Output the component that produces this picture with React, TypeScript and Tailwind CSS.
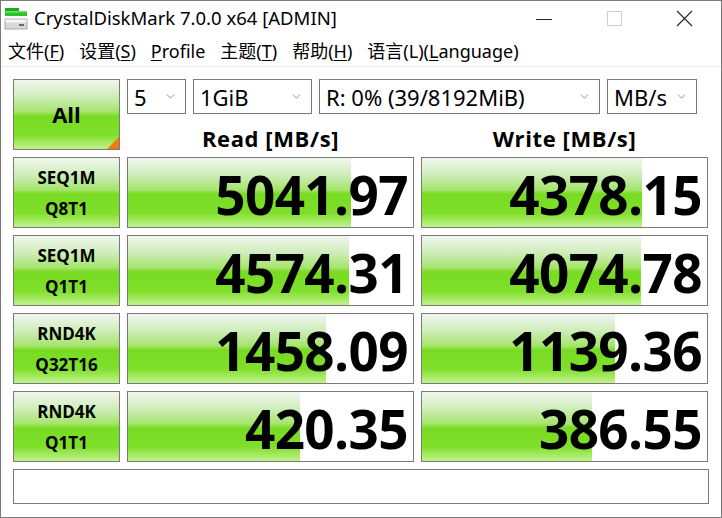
import { ChevronDown } from "lucide-react";

const rows = [
  { l1: "SEQ1M", l2: "Q8T1", read: "5041.97", write: "4378.15" },
  { l1: "SEQ1M", l2: "Q1T1", read: "4574.31", write: "4074.78" },
  { l1: "RND4K", l2: "Q32T16", read: "1458.09", write: "1139.36" },
  { l1: "RND4K", l2: "Q1T1", read: "420.35", write: "386.55" },
];

const green =
  "bg-[linear-gradient(to_bottom,#f1f6ee_0%,#d2eec0_22%,#a6e46e_46%,#78db22_52%,#80e02c_80%,#c2f28e_100%)]";

// log scale like the real meter
const ratio = (v: string) => Math.min(1, Math.log10(parseFloat(v) * 10) / 6);

function Mnemonic({ pre, key_, post }: { pre: string; key_: string; post: string }) {
  return (
    <span>
      {pre}
      <span className="underline underline-offset-2">{key_}</span>
      {post}
    </span>
  );
}

function Select({ text, w }: { text: string; w: string }) {
  return (
    <div className={`${w} h-[35px] border border-[#7a7a7a] bg-white flex items-center justify-between pl-[6px] pr-[8px]`}>
      <span className="text-[22px] leading-none text-black">{text}</span>
      <ChevronDown size={13} strokeWidth={1.2} className="text-[#555]" />
    </div>
  );
}

function Meter({ value }: { value: string }) {
  return (
    <div className="relative h-[71px] border border-[#7a7a7a] bg-white flex items-center justify-end pr-[5px]">
      <div className={`absolute left-0 top-0 bottom-0 ${green}`} style={{ width: `${ratio(value) * 100}%` }} />
      <span className="relative text-[53px] font-bold leading-none text-black tracking-[-0.6px] pt-[4px]">{value}</span>
    </div>
  );
}

export default function App() {
  return (
    <div className="w-[722px] h-[518px] bg-white border border-[#7a7a7a] flex flex-col font-['Noto_Sans','Noto_Sans_CJK_SC',sans-serif] text-black overflow-hidden">
      {/* title bar */}
      <div className="h-[34px] flex items-center shrink-0">
        <svg width="24" height="24" viewBox="0 0 24 24" className="ml-[3px]">
          <rect x="1" y="2" width="14" height="4" fill="#1faa1f" />
          <rect x="1" y="5" width="22" height="5" fill="#2cc22c" />
          <rect x="1" y="5" width="22" height="1.5" fill="#6fe06f" />
          <rect x="1" y="13" width="22" height="10" fill="#d8d8d8" stroke="#9a9a9a" strokeWidth="0.8" />
          <rect x="1.5" y="13.5" width="21" height="3" fill="#f4f4f4" />
          <rect x="15" y="18" width="5" height="2" fill="#6a6a6a" />
        </svg>
        <span className="ml-[6px] text-[18.5px] leading-none">CrystalDiskMark 7.0.0 x64 [ADMIN]</span>
        <div className="ml-auto flex items-center h-full">
          <div className="w-[70px] h-full flex items-center justify-center">
            <div className="w-[16px] h-px bg-[#222] mt-[2px]" />
          </div>
          <div className="w-[70px] h-full flex items-center justify-center">
            <div className="w-[15px] h-[15px] border border-[#cfcfcf]" />
          </div>
          <div className="w-[70px] h-full flex items-center justify-center mr-[2px]">
            <svg width="17" height="17" viewBox="0 0 17 17">
              <path d="M1 1 L16 16 M16 1 L1 16" stroke="#222" strokeWidth="1.1" />
            </svg>
          </div>
        </div>
      </div>

      {/* menu bar */}
      <div className="h-[32px] flex items-center gap-[15px] pl-[7px] text-[18px] leading-none border-b border-[#ececec] shrink-0">
        <Mnemonic pre="文件(" key_="F" post=")" />
        <Mnemonic pre="设置(" key_="S" post=")" />
        <Mnemonic pre="" key_="P" post="rofile" />
        <Mnemonic pre="主题(" key_="T" post=")" />
        <Mnemonic pre="帮助(" key_="H" post=")" />
        <Mnemonic pre="语言(L)(" key_="L" post="anguage)" />
      </div>

      {/* body */}
      <div className="pl-[12px] pt-[12px] flex flex-col gap-[7px] font-['Open_Sans','Noto_Sans',sans-serif]">
        <div className="grid grid-cols-[107px_287px_287px] gap-x-[7px] h-[71px]">
          <div className={`relative h-[71px] border border-[#7a7a7a] ${green} flex items-center justify-center`}>
            <span className="text-[22px] font-bold">All</span>
            <div className="absolute right-0 bottom-0 w-0 h-0 border-l-[12px] border-l-transparent border-b-[12px] border-b-[#f27a0c]" />
          </div>
          <div className="col-span-2 flex flex-col">
            <div className="flex gap-[7px] font-['Noto_Sans',sans-serif]">
              <Select text="5" w="w-[59px]" />
              <Select text="1GiB" w="w-[119px]" />
              <Select text="R: 0% (39/8192MiB)" w="w-[281px]" />
              <Select text="MB/s" w="w-[90px]" />
            </div>
            <div className="grid grid-cols-[287px_287px] gap-x-[7px] h-[36px]">
              <div className="h-[36px] flex items-center justify-center pt-[12px] text-[22px] leading-none font-bold tracking-[0.6px]">Read [MB/s]</div>
              <div className="h-[36px] flex items-center justify-center pt-[12px] text-[22px] leading-none font-bold tracking-[0.6px]">Write [MB/s]</div>
            </div>
          </div>
        </div>

        {rows.map((r, i) => (
          <div key={i} className="grid grid-cols-[107px_287px_287px] gap-x-[7px]">
            <div className={`h-[71px] border border-[#7a7a7a] ${green} flex flex-col items-center justify-center text-[17px] font-bold leading-[31px]`}>
              <span>{r.l1}</span>
              <span>{r.l2}</span>
            </div>
            <Meter value={r.read} />
            <Meter value={r.write} />
          </div>
        ))}

        <div className="w-[696px] h-[35px] border border-[#7a7a7a] bg-white" />
      </div>
    </div>
  );
}
